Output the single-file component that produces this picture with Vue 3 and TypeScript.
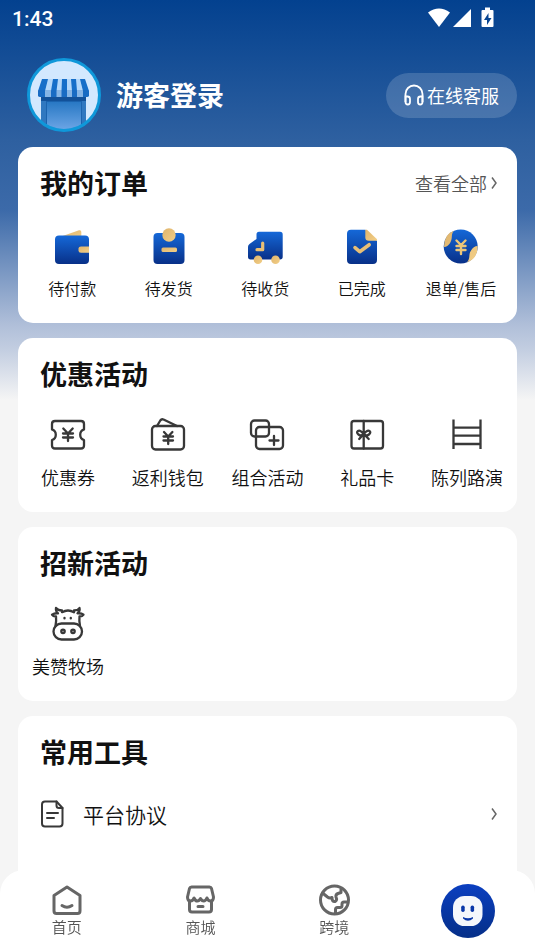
<script setup lang="ts">
interface Entry {
  id: string
  label: string
}

const orders: Entry[] = [
  { id: 'pay', label: '待付款' },
  { id: 'ship', label: '待发货' },
  { id: 'receive', label: '待收货' },
  { id: 'done', label: '已完成' },
  { id: 'refund', label: '退单/售后' },
]

const promos: Entry[] = [
  { id: 'coupon', label: '优惠券' },
  { id: 'wallet', label: '返利钱包' },
  { id: 'combo', label: '组合活动' },
  { id: 'gift', label: '礼品卡' },
  { id: 'shelf', label: '陈列路演' },
]

const tabs: Entry[] = [
  { id: 'home', label: '首页' },
  { id: 'mall', label: '商城' },
  { id: 'global', label: '跨境' },
]
</script>

<template>
  <div class="page">
    <svg class="defs" width="0" height="0" aria-hidden="true">
      <defs>
        <linearGradient id="blue" x1="0" y1="0" x2="0" y2="1">
          <stop offset="0" stop-color="#1568d8" />
          <stop offset="1" stop-color="#083088" />
        </linearGradient>
        <linearGradient id="gold" x1="0" y1="0" x2="1" y2="1">
          <stop offset="0" stop-color="#dfb46c" />
          <stop offset="1" stop-color="#f3cf87" />
        </linearGradient>
      </defs>
    </svg>

    <div class="status">
      <span class="clock">1:43</span>
      <svg class="signals" width="67" height="22" viewBox="0 0 67 22" fill="#fff" aria-hidden="true">
        <path d="M0 5.500Q11-2.500 22 5.500L11 20z" />
        <path d="M43 2v18H25z" />
        <path fill-rule="evenodd" d="M57 .5h5V3h2.500q1 0 1 1v15q0 1-1 1h-10q-1 0-1-1V4q0-1 1-1H57zM60.500 6l-4.500 7h3v5l4.500-7h-3z" />
      </svg>
    </div>

    <header class="header">
      <button class="login" type="button">
        <svg class="avatar" viewBox="0 0 74 74" aria-hidden="true">
          <defs>
            <linearGradient id="door" x1="0" y1="0" x2="0" y2="1">
              <stop offset="0" stop-color="#2878c4" />
              <stop offset="1" stop-color="#72a9e8" />
            </linearGradient>
            <clipPath id="round"><circle cx="37" cy="37" r="34.500" /></clipPath>
          </defs>
          <circle cx="37" cy="37" r="35.500" fill="#d3e8fe" />
          <g clip-path="url(#round)">
            <path d="M14 34h45v40H14z" fill="#1b63ae" />
            <path d="M14 38h5v36h-5zM55 38h4v36h-4z" fill="#3078c0" />
            <path d="M20 44h34v30H20z" fill="url(#door)" />
            <path d="M14 38h45v5H14z" fill="#125199" />
          </g>
          <path d="M15 21h43l4 12v5q-1 1-2 1H13q-1 0-2-1v-5z" fill="#176fc9" />
          <path d="M21 21h5l-2 12v6h-6v-6zM31 21h4l-.500 12v6h-5v-6zM40 21h4l1 12v6h-5v-6zM49 21h4l3 12v6h-6v-6z" fill="#b5d8fa" />
          <path d="M11 32h51v6q-1 1-2 1H13q-1 0-2-1z" fill="#1a65b6" opacity=".3" />
          <circle cx="37" cy="37" r="35.500" fill="none" stroke="#0f98da" stroke-width="3" />
        </svg>
        <span class="name">游客登录</span>
      </button>
      <button class="service" type="button">
        <svg width="20" height="22" viewBox="0 0 20 22" fill="none" stroke="#fff" stroke-width="1.800" aria-hidden="true">
          <path d="M1.500 18V10a8.500 8.500 0 0 1 17 0v8" />
          <path d="M1.500 12.500h2q2.500 0 2.500 2.500v3q0 2.500-2.200 2.500T1.500 18zM18.500 12.500h-2Q14 12.500 14 15v3q0 2.500 2.200 2.500T18.500 18z" />
        </svg>
        <span>在线客服</span>
      </button>
    </header>

    <main class="cards">
      <section class="card">
        <div class="card-head">
          <h2>我的订单</h2>
          <a class="more" href="#orders">
            查看全部
            <svg class="chevron" viewBox="0 0 6 14" aria-hidden="true"><path d="M1 1.500l4 5.500-4 5.500" /></svg>
          </a>
        </div>
        <nav class="orders">
          <a v-for="item in orders" :key="item.id" class="entry" :href="'#' + item.id">
            <svg class="icon" viewBox="0 0 40 40" fill="url(#blue)" aria-hidden="true">
              <template v-if="item.id === 'pay'">
                <path d="M5 11L27 3.300q2.300-.6 2.300 1.700v8z" fill="url(#gold)" />
                <rect x="3" y="8.500" width="34" height="28.500" rx="4" />
                <path d="M37 19.500h-8q-2.500 0-2.500 2v2.200q0 2 2.500 2h8z" fill="url(#gold)" />
              </template>
              <template v-else-if="item.id === 'ship'">
                <rect x="4.500" y="6" width="31" height="31" rx="4" />
                <circle cx="20" cy="8" r="6.700" fill="url(#gold)" />
                <rect x="12.500" y="20.500" width="15.500" height="4.500" rx="1.500" fill="url(#gold)" />
              </template>
              <template v-else-if="item.id === 'receive'">
                <path d="M14 4.700h21q2.700 0 2.700 2.700v22.300q0 2.700-2.700 2.700H5.500Q3 32.400 3 29.700V20q0-2 1.500-3l7-5V7.200q0-2.500 2.500-2.500z" />
                <circle cx="13" cy="32.700" r="4.300" fill="url(#gold)" />
                <circle cx="30.500" cy="32.700" r="4.300" fill="url(#gold)" />
                <path d="M17.700 16v6.700H12" fill="none" stroke="#e8bf76" stroke-width="3.200" stroke-linecap="round" stroke-linejoin="round" />
              </template>
              <template v-else-if="item.id === 'done'">
                <path d="M9 2.700h14.300l11.700 11V33q0 4-4 4H9q-4 0-4-4V6.700q0-4 4-4z" />
                <path d="M23.300 2.700H25l10 9.500v1.500h-8.200q-3.500 0-3.500-3.500z" fill="url(#gold)" />
                <path d="M13 20.700l4.700 4 9.500-7" fill="none" stroke="#e8bf76" stroke-width="3.600" stroke-linecap="round" stroke-linejoin="round" />
              </template>
              <template v-else>
                <circle cx="19.700" cy="19.500" r="17" />
                <path d="M3 20Q3 7 13 3.800c-3.500 3.500-1 7-3.500 11.500Q7 20 3 20zM36.700 19q0 13-11 16.500c4-4 1.500-7 4-11.500Q32.500 19 36.700 19z" fill="url(#gold)" />
                <path d="M15.500 13.500l4.500 4.500 4.500-4.500M15.500 19h9M15.500 23h9M20 18.500V27" fill="none" stroke="#ecc678" stroke-width="2.400" stroke-linecap="round" />
              </template>
            </svg>
            <span>{{ item.label }}</span>
          </a>
        </nav>
      </section>

      <section class="card">
        <div class="card-head"><h2>优惠活动</h2></div>
        <nav class="promos">
          <a v-for="item in promos" :key="item.id" class="entry" :href="'#' + item.id">
            <svg class="icon line" viewBox="0 0 40 40" aria-hidden="true">
              <template v-if="item.id === 'coupon'">
                <path d="M7 6h26q3 0 3 3v5.400a5.600 5.600 0 0 0 0 10.600v5.500q0 3-3 3H7q-3 0-3-3V25a5.600 5.600 0 0 0 0-10.600V9q0-3 3-3z" />
                <path d="M15.300 13.500l4.700 5 4.700-5M15 18.500h10M15 22.500h10M20 18.500V26" />
              </template>
              <template v-else-if="item.id === 'wallet'">
                <rect x="4" y="11" width="32" height="23.500" rx="3.500" />
                <path d="M9 11l3.300-5.500q1.200-1.800 3.200-1L29 11" />
                <path d="M16 17l4.200 4.500 4.200-4.500M15.500 21.500H25M15.500 25.500H25M20.200 21.500V29" />
              </template>
              <template v-else-if="item.id === 'combo'">
                <rect x="4" y="5.500" width="18" height="16" rx="3.500" />
                <rect x="9" y="12" width="27" height="22" rx="3.500" />
                <path d="M22.500 25.500h9M27 21v9" />
              </template>
              <template v-else-if="item.id === 'gift'">
                <rect x="4.500" y="6" width="31.500" height="27.500" rx="2.500" />
                <path d="M16.700 6v27.500M16.700 19q-3.700-4.500-5.700-3t.5 3.500 5.200-.5q3.700-4.500 5.700-3t-.5 3.500-5.200-.5l-4.500 5M16.700 19l5 5" />
              </template>
              <template v-else>
                <path d="M6.500 4.500V34M33.500 4.500V34M6.500 12.700h27M6.500 20.700h27M6.500 29h27" stroke-linecap="butt" />
              </template>
            </svg>
            <span>{{ item.label }}</span>
          </a>
        </nav>
      </section>

      <section class="card">
        <div class="card-head"><h2>招新活动</h2></div>
        <nav class="promos">
          <a class="entry" href="#ranch">
            <svg class="icon line" viewBox="0 0 40 40" aria-hidden="true">
              <rect x="5.500" y="19.500" width="28.500" height="16" rx="8" />
              <path d="M7.500 22q1-5 .5-9.500-3 0-4-1.800 2.500-1.700 6-1.400Q7.500 7 8 4q2 2.500 6 2.500v1.700q6-3.400 12 0V6.500Q30 6.500 31.500 4q.8 3-2 5.300 4-.3 6 1.400-1 1.800-4 1.800-.5 4.500.5 9.500" />
              <circle cx="15" cy="27.300" r="1.700" />
              <circle cx="25" cy="27.300" r="1.700" />
              <path d="M16.500 13.800v.6M22.800 13.800v.6" />
            </svg>
            <span>美赞牧场</span>
          </a>
        </nav>
      </section>

      <section class="card tools">
        <div class="card-head"><h2>常用工具</h2></div>
        <a class="tool" href="#agreement">
          <svg class="line" width="24" height="28" viewBox="0 0 24 28" aria-hidden="true">
            <path d="M5 1.500h11.500l6 6.500v15.500q0 3-3 3H5q-3 0-3-3v-19q0-3 3-3z" />
            <path d="M16.500 1.500V5.500q0 2.500 2.500 2.500h3.500M7 13h11M7 18h7" />
          </svg>
          <span>平台协议</span>
          <svg class="chevron" viewBox="0 0 6 14" aria-hidden="true"><path d="M1 1.500l4 5.500-4 5.500" /></svg>
        </a>
      </section>
    </main>

    <nav class="tabbar">
      <a v-for="tab in tabs" :key="tab.id" class="tab" :href="'#' + tab.id">
        <svg width="32" height="32" viewBox="0 0 32 32" aria-hidden="true">
          <template v-if="tab.id === 'home'">
            <path d="M3 11.500L16 3l13 8.500V27q0 2.500-2.500 2.500h-21Q3 29.500 3 27z" />
            <path d="M11 21.500q5 3.500 10 0" />
          </template>
          <template v-else-if="tab.id === 'mall'">
            <path d="M6.500 3h18q1.500 0 2 1.500l2 8.500q0 4-3 4-2.500 0-3.500-3-1.500 3-3.300 3t-3.200-2.500q-1.300 2.500-3.200 2.500T9 14q-1 3-3.500 3-3 0-3-4l2-8.500Q5 3 6.500 3z" />
            <path d="M4.500 17v8.500q0 2.500 2.500 2.500h17q2.500 0 2.500-2.500V17M13 22.500h5" />
          </template>
          <template v-else>
            <circle cx="16.500" cy="16" r="14" />
            <path d="M4.500 9l5 4q2 1.500 4.500.5 0 4.500 3 4 2.500-1 1-4.500-.5-2.500 2-3.500l3-1V5M17.500 29v-3.500q0-2 2-2h2.500q2 0 2-2V20q0-2 2-2h3" />
          </template>
        </svg>
        <span>{{ tab.label }}</span>
      </a>
      <a class="tab mine" href="#mine" aria-label="我的">
        <svg width="54" height="54" viewBox="0 0 54 54" aria-hidden="true">
          <defs>
            <linearGradient id="face" x1="0" y1="0" x2="0" y2="1">
              <stop offset="0" stop-color="#0b3fc0" />
              <stop offset="1" stop-color="#052f88" />
            </linearGradient>
          </defs>
          <circle cx="27" cy="27" r="27" fill="url(#face)" />
          <rect x="12" y="12" width="29.500" height="30" rx="11.500" fill="#f5f7fb" />
          <g fill="#0a37a8">
            <rect x="20.200" y="21.500" width="3.500" height="6.500" rx="1.700" />
            <rect x="29.600" y="21.500" width="3.500" height="6.500" rx="1.700" />
            <path d="M22 33q5 2.600 10 0v1.500q-5 4.500-10 0z" />
          </g>
        </svg>
      </a>
    </nav>
  </div>
</template>

<style>
body {
  background: #f5f5f5;
}
</style>

<style scoped>
.page {
  box-sizing: border-box;
  display: flex;
  flex-direction: column;
  min-height: 100vh;
  color: #111;
  font-family: "Noto Sans CJK SC", "Noto Sans", sans-serif;
  font-weight: 350;
  background: linear-gradient(#03418f 0, #2e60a0 140px, #3c6aa9 210px, #b0bfd9 325px, #c3cee1 350px, #f5f5f5 400px);
}
.defs {
  position: absolute;
}
a {
  color: inherit;
  text-decoration: none;
}
button {
  border: 0;
  color: #fff;
  font-family: inherit;
  cursor: pointer;
}
.status {
  display: flex;
  align-items: center;
  justify-content: space-between;
  height: 36px;
  padding: 0 40px 0 12px;
}
.clock {
  color: #fff;
  font: 500 21px/36px Roboto, sans-serif;
  padding-top: 2px;
}
.header {
  display: flex;
  align-items: center;
  justify-content: space-between;
  padding: 22px 18px 15px 27px;
}
.login {
  display: flex;
  align-items: center;
  gap: 15px;
  padding: 0;
  background: none;
}
.avatar {
  width: 74px;
  height: 74px;
}
.name {
  font-size: 27px;
  font-weight: 700;
  line-height: 36px;
}
.service {
  display: flex;
  align-items: center;
  gap: 3px;
  padding: 9px 18px;
  border-radius: 24px;
  background: rgba(255, 255, 255, 0.16);
  font-size: 18px;
  line-height: 27px;
}
.cards {
  display: flex;
  flex: 1;
  flex-direction: column;
  gap: 15px;
  padding: 0 18px;
}
.card {
  border-radius: 15px;
  background: #fff;
  padding-bottom: 22px;
}
.card-head {
  display: flex;
  align-items: center;
  justify-content: space-between;
  padding: 18px 20px 0 22px;
}
h2 {
  margin: 0;
  color: #111;
  font-size: 27px;
  font-weight: 700;
  line-height: 36px;
}
.more {
  display: flex;
  align-items: center;
  gap: 4px;
  color: #555;
  font-size: 18px;
  line-height: 36px;
}
.chevron {
  width: 6px;
  height: 14px;
  fill: none;
  stroke: #666;
  stroke-width: 1.5;
}
.orders {
  display: grid;
  grid-template-columns: repeat(4, 1fr) 102px;
  padding: 26px 5px 0 6px;
  font-size: 16px;
}
.promos {
  display: grid;
  grid-template-columns: repeat(5, 1fr);
  padding-top: 23px;
  font-size: 18px;
}
.entry {
  display: flex;
  flex-direction: column;
  align-items: center;
  gap: 9px;
  line-height: 26px;
  white-space: nowrap;
}
.orders .entry {
  gap: 8px;
}
.icon {
  width: 40px;
  height: 40px;
}
.line {
  fill: none;
  stroke: #383838;
  stroke-width: 2.3;
  stroke-linecap: round;
  stroke-linejoin: round;
}
.tool .line {
  stroke-width: 2;
}
.tools {
  flex: 1;
  padding-bottom: 96px;
  border-radius: 15px 15px 0 0;
}
.tool {
  display: flex;
  align-items: center;
  gap: 19px;
  padding: 29px 20px 0 22px;
  font-size: 21px;
  line-height: 30px;
}
.tool .chevron {
  margin-left: auto;
}
.tabbar {
  position: fixed;
  right: 0;
  bottom: 0;
  left: 0;
  display: grid;
  grid-template-columns: repeat(4, 1fr);
  align-items: center;
  border-radius: 24px 24px 0 0;
  background: #fff;
}
.tab {
  display: flex;
  flex-direction: column;
  align-items: center;
  padding: 14px 0 13px;
  color: #555;
  font-size: 15px;
  line-height: 22px;
}
.tab svg {
  fill: none;
  stroke: #666;
  stroke-width: 3;
  stroke-linecap: round;
  stroke-linejoin: round;
}
.mine svg {
  stroke: none;
}
</style>
